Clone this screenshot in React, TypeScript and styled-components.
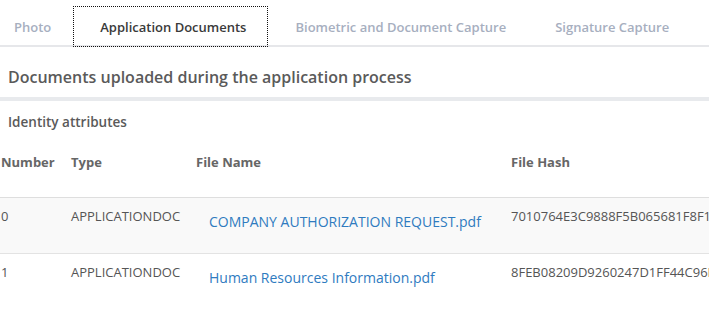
import React from 'react';
import styled, { createGlobalStyle } from 'styled-components';

const GlobalStyle = createGlobalStyle`
  body {
    margin: 0;
    background: #fff;
    font-family: 'Open Sans', 'Noto Sans', sans-serif;
    overflow: hidden;
  }
`;

const Page = styled.div`
  width: 709px;
  height: 329px;
  overflow: hidden;
`;

const TabBar = styled.ul`
  display: flex;
  list-style: none;
  margin: 0;
  padding: 6px 0 0 0;
  border-bottom: 2px solid #e6e7ea;
  height: 39px;
  box-sizing: content-box;
`;

interface TabProps {
  active?: boolean;
}

const Tab = styled.li<TabProps>`
  display: flex;
  align-items: center;
  padding: 0 22px 0 27px;
  margin-bottom: -2px;
  font-size: 13px;
  font-weight: 600;
  color: ${({ active }) => (active ? '#3a3a3a' : '#a7afbf')};
  outline: ${({ active }) => (active ? '1px dotted #111' : 'none')};
  outline-offset: -1px;
  white-space: nowrap;

  &:first-child {
    padding: 0 22px 0 14px;
  }
`;

const Heading = styled.h2`
  margin: 0;
  padding: 19px 8px 0;
  height: 31px;
  font-size: 16px;
  font-weight: 600;
  color: #5a5a5a;
  border-bottom: 4px solid #e8eaed;
`;

const SubHeading = styled.h3`
  margin: 0;
  padding: 12px 8px 0;
  height: 31px;
  font-size: 13.5px;
  font-weight: 600;
  color: #5a5a5a;
`;

const Table = styled.table`
  border-collapse: collapse;
  table-layout: fixed;
  width: 900px;
  font-size: 13px;
`;

const Th = styled.th<{ w: number }>`
  width: ${({ w }) => w}px;
  text-align: left;
  font-weight: 700;
  font-size: 13px;
  color: #666;
  padding: 9px 0 0 1px;
  height: 44px;
  vertical-align: top;
  border-bottom: 1px solid #dedede;
`;

const Row = styled.tr<{ striped?: boolean }>`
  background: ${({ striped }) => (striped ? '#f9f9f9' : '#fff')};
  border-bottom: 1px solid ${({ striped }) => (striped ? '#e3e3e3' : 'transparent')};
`;

const Td = styled.td`
  vertical-align: top;
  padding: 9px 0 0 1px;
  height: 46px;
  color: #555;
  white-space: nowrap;
  overflow: visible;
`;

const FileLink = styled.a`
  display: inline-block;
  margin: 5px 0 0 13px;
  font-size: 14px;
  color: #2f7bbf;
  text-decoration: none;
`;

const docs = [
  { num: 0, type: 'APPLICATIONDOC', name: 'COMPANY AUTHORIZATION REQUEST.pdf', hash: '7010764E3C9888F5B065681F8F1A2C' },
  { num: 1, type: 'APPLICATIONDOC', name: 'Human Resources Information.pdf', hash: '8FEB08209D9260247D1FF44C96E0B1' },
];

export default function App() {
  return (
    <Page>
      <GlobalStyle />
      <TabBar>
        <Tab>Photo</Tab>
        <Tab active>Application Documents</Tab>
        <Tab>Biometric and Document Capture</Tab>
        <Tab>Signature Capture</Tab>
      </TabBar>
      <Heading>Documents uploaded during the application process</Heading>
      <SubHeading>Identity attributes</SubHeading>
      <Table>
        <thead>
          <tr>
            <Th w={69}>Number</Th>
            <Th w={124}>Type</Th>
            <Th w={314}>File Name</Th>
            <Th w={389}>File Hash</Th>
          </tr>
        </thead>
        <tbody>
          {docs.map((d, i) => (
            <Row key={d.num} striped={i % 2 === 0}>
              <Td>{d.num}</Td>
              <Td>{d.type}</Td>
              <Td>
                <FileLink href="#">{d.name}</FileLink>
              </Td>
              <Td>{d.hash}</Td>
            </Row>
          ))}
        </tbody>
      </Table>
    </Page>
  );
}
